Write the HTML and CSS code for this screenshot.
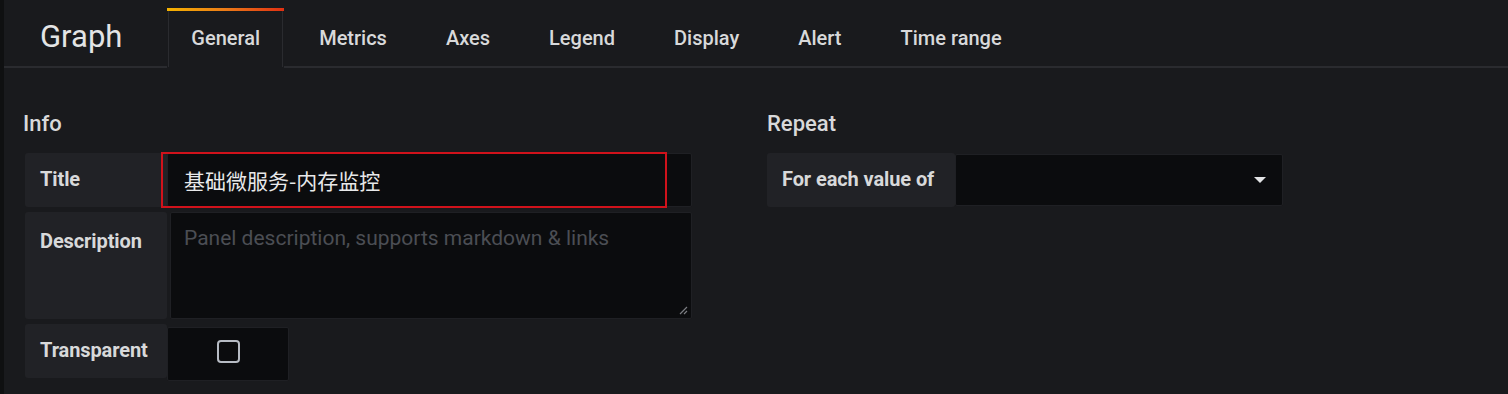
FILE: index.html
```html
<!DOCTYPE html>
<html lang="zh">
<head>
    <meta charset="UTF-8">
    <title>Graph - General</title>
    <link rel="stylesheet" href="styles.css">
</head>
<body>
    <div class="panel">
        <div class="header">
            <div class="panel-title">Graph</div>
            <div class="tabs">
                <div class="tab active">General</div>
                <div class="tab">Metrics</div>
                <div class="tab">Axes</div>
                <div class="tab">Legend</div>
                <div class="tab">Display</div>
                <div class="tab">Alert</div>
                <div class="tab">Time range</div>
            </div>
        </div>

        <div class="content">
            <div class="section info">
                <h3>Info</h3>
                <div class="row">
                    <div class="label">Title</div>
                    <div class="input title-input">
                        <span class="value">基础微服务-内存监控</span>
                        <div class="highlight"></div>
                    </div>
                </div>
                <div class="row">
                    <div class="label tall">Description</div>
                    <div class="input textarea">
                        <span class="placeholder">Panel description, supports markdown &amp; links</span>
                        <svg class="resize" width="10" height="10" viewBox="0 0 10 10">
                            <path d="M9 2 L2 9 M9 6 L6 9" stroke="#7b7d82" stroke-width="1.2" fill="none"/>
                        </svg>
                    </div>
                </div>
                <div class="row">
                    <div class="label">Transparent</div>
                    <div class="input check-box">
                        <span class="checkbox"></span>
                    </div>
                </div>
            </div>

            <div class="section repeat">
                <h3>Repeat</h3>
                <div class="row">
                    <div class="label wide">For each value of</div>
                    <div class="input select">
                        <span class="caret"></span>
                    </div>
                </div>
            </div>
        </div>
    </div>
</body>
</html>
```

FILE: styles.css
```css
body {
    margin: 0;
    background-color: #0f1011;
    font-family: Roboto, "Noto Sans CJK SC", sans-serif;
    color: #d8d9da;
    display: flex;
    height: 394px;
    overflow: hidden;
}
.panel {
    flex: 1;
    margin-left: 4px;
    background-color: #191a1d;
}
.header {
    display: flex;
    align-items: flex-end;
    height: 66px;
    border-bottom: 2px solid #2a2b2f;
    padding-left: 36px;
}
.panel-title {
    font-size: 31px;
    font-weight: 400;
    color: #e3e4e5;
    align-self: center;
    margin-top: 6px;
    margin-right: 45px;
}
.tabs {
    display: flex;
    align-items: flex-end;
    margin-bottom: -2px;
}
.tab {
    font-size: 20px;
    font-weight: 500;
    color: #d8d9da;
    padding: 0 23px;
    margin-right: 11px;
    height: 56px;
    line-height: 54px;
    border: 1px solid transparent;
    border-top: 3px solid transparent;
}
.tab.active {
    background-color: #191a1d;
    border-color: #2a2b2f;
    border-bottom-color: #191a1d;
    border-top: 3px solid transparent;
    border-image: linear-gradient(90deg, #f5b400, #eb7b18, #e02f12) 1;
    border-image-width: 3px 0 0 0;
    box-shadow: inset 1px 0 0 #2a2b2f, inset -1px 0 0 #2a2b2f;
}
.content {
    display: flex;
    padding: 43px 0 0 21px;
    gap: 75px;
}
.section h3 {
    margin: 0 0 16px -2px;
    font-size: 22px;
    font-weight: 500;
    color: #d8d9da;
    line-height: 26px;
}
.repeat h3 {
    margin-left: 0;
}
.info {
    width: 667px;
}
.row {
    display: flex;
    margin-bottom: 5px;
}
.label {
    width: 142px;
    box-sizing: border-box;
    background-color: #212226;
    border-radius: 3px;
    padding: 0 15px;
    font-size: 20px;
    font-weight: 700;
    height: 54px;
    line-height: 52px;
    white-space: nowrap;
    letter-spacing: -0.1px;
}
.label.tall {
    height: 107px;
    line-height: 58px;
}
.label.wide {
    width: 188px;
}
.input {
    background-color: #0b0c0e;
    border: 1px solid #1f2024;
    box-sizing: border-box;
    position: relative;
    border-radius: 2px;
}
.title-input {
    flex: 1;
    height: 54px;
    display: flex;
    align-items: center;
    padding-left: 16px;
}
.value {
    font-size: 21px;
    color: #e8e9ea;
    font-family: "Noto Sans CJK SC", Roboto, sans-serif;
}
.highlight {
    position: absolute;
    left: -7px;
    top: -2px;
    width: 506px;
    height: 56px;
    border: 2px solid #d0121b;
    box-sizing: border-box;
}
.textarea {
    flex: 1;
    height: 107px;
    margin-left: 3px;
    padding: 13px 13px;
}
.placeholder {
    font-size: 21px;
    color: #4b4e54;
}
.resize {
    position: absolute;
    right: 3px;
    bottom: 3px;
}
.check-box {
    width: 122px;
    height: 54px;
    margin-top: 3px;
    display: flex;
    align-items: center;
    justify-content: center;
    padding-bottom: 6px;
}
.checkbox {
    width: 19px;
    height: 19px;
    border: 2px solid #b7bcc4;
    border-radius: 4px;
}
.select {
    width: 328px;
    height: 52px;
    margin-top: 1px;
    display: flex;
    align-items: center;
    justify-content: flex-end;
    padding-right: 16px;
}
.caret {
    width: 0;
    height: 0;
    border-left: 6px solid transparent;
    border-right: 6px solid transparent;
    border-top: 6px solid #e3e4e5;
}
```
